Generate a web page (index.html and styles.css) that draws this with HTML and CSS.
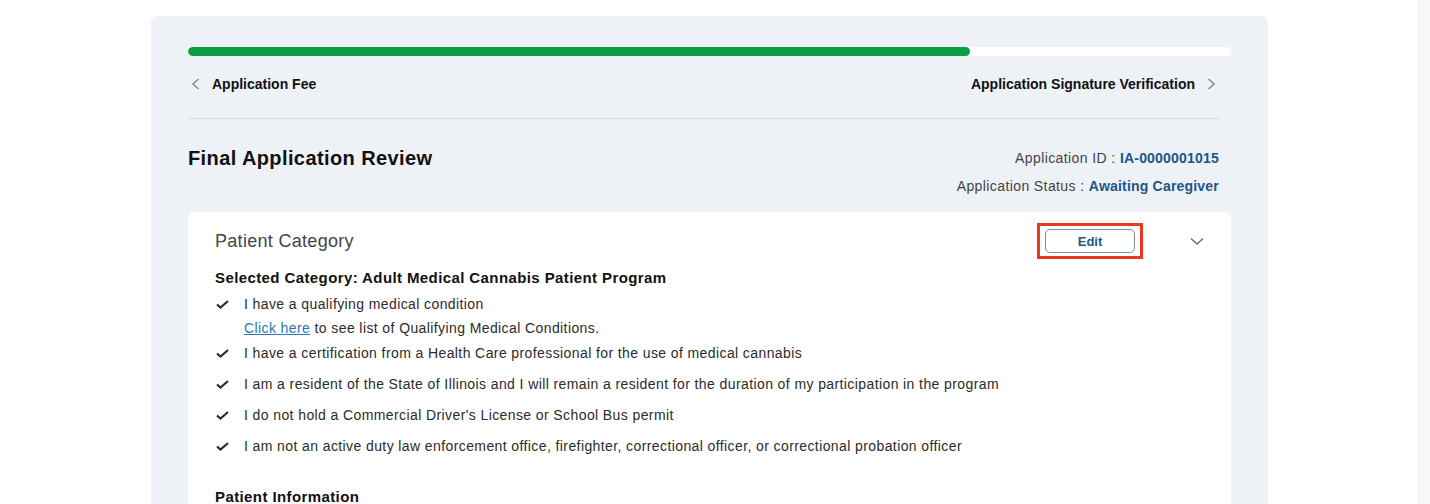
FILE: index.html
```html
<!DOCTYPE html>
<html>
  <head>
    <meta charset="UTF-8">
    <title>Final Application Review</title>
    <link rel="stylesheet" href="styles.css">
  </head>
  <body>
    <div class="page">
      <main class="main">
        <section class="panel">
          <div class="progress"><div class="progress-fill" style="width: 75%"></div></div>

          <nav class="steps">
            <a class="step" href="#">
              <svg class="step-icon" width="9" height="12" viewBox="0 0 9 12"><path d="M7.5 1 L2 6 L7.5 11" fill="none" stroke="#8a8f96" stroke-width="1.6"/></svg>
              Application Fee
            </a>
            <a class="step" href="#">
              Application Signature Verification
              <svg class="step-icon" width="9" height="12" viewBox="0 0 9 12"><path d="M1.5 1 L7 6 L1.5 11" fill="none" stroke="#8a8f96" stroke-width="1.6"/></svg>
            </a>
          </nav>

          <div class="review-head">
            <h1 class="review-title">Final Application Review</h1>
            <div class="meta">
              <p class="meta-row">Application ID : <b>IA-0000001015</b></p>
              <p class="meta-row">Application Status : <b>Awaiting Caregiver</b></p>
            </div>
          </div>

          <div class="card">
            <div class="card-head">
              <h2 class="card-title">Patient Category</h2>
              <span class="highlight"><button type="button" class="edit-btn">Edit</button></span>
              <svg class="toggle" width="14" height="9" viewBox="0 0 14 9"><path d="M1 1.5 L7 7 L13 1.5" fill="none" stroke="#6b7078" stroke-width="1.5"/></svg>
            </div>

            <h3 class="sub-title">Selected Category: Adult Medical Cannabis Patient Program</h3>
            <ul class="checks">
              <li class="has-note">
                <svg class="check" width="13" height="9" viewBox="0 0 13 9"><path d="M1 4.5 L4.5 7.5 L12 1" fill="none" stroke="#2b2b2b" stroke-width="2.2"/></svg>
                <div>
                  I have a qualifying medical condition
                  <p class="note"><a href="#">Click here</a> to see list of Qualifying Medical Conditions.</p>
                </div>
              </li>
              <li>
                <svg class="check" width="13" height="9" viewBox="0 0 13 9"><path d="M1 4.5 L4.5 7.5 L12 1" fill="none" stroke="#2b2b2b" stroke-width="2.2"/></svg>
                <div>I have a certification from a Health Care professional for the use of medical cannabis</div>
              </li>
              <li>
                <svg class="check" width="13" height="9" viewBox="0 0 13 9"><path d="M1 4.5 L4.5 7.5 L12 1" fill="none" stroke="#2b2b2b" stroke-width="2.2"/></svg>
                <div>I am a resident of the State of Illinois and I will remain a resident for the duration of my participation in the program</div>
              </li>
              <li>
                <svg class="check" width="13" height="9" viewBox="0 0 13 9"><path d="M1 4.5 L4.5 7.5 L12 1" fill="none" stroke="#2b2b2b" stroke-width="2.2"/></svg>
                <div>I do not hold a Commercial Driver's License or School Bus permit</div>
              </li>
              <li>
                <svg class="check" width="13" height="9" viewBox="0 0 13 9"><path d="M1 4.5 L4.5 7.5 L12 1" fill="none" stroke="#2b2b2b" stroke-width="2.2"/></svg>
                <div>I am not an active duty law enforcement office, firefighter, correctional officer, or correctional probation officer</div>
              </li>
            </ul>

            <h3 class="sub-title section-gap">Patient Information</h3>
          </div>
        </section>
      </main>
      <div class="scrollbar"></div>
    </div>
  </body>
</html>
```

FILE: styles.css
```css
:root {
  --panel-bg: #eef1f5;
  --green: #0b9e45;
  --blue: #1b5889;
  --text: #2b2b2b;
  --muted: #444;
}

html, body {
  margin: 0;
  height: 100%;
  overflow: hidden;
  background: #fff;
  font-family: "Liberation Sans", Arial, sans-serif;
  color: var(--text);
}

.page {
  display: flex;
  height: 100%;
}

.main {
  flex: 1;
  display: flex;
  justify-content: center;
  padding: 16px 0 0 1px;
}

.scrollbar {
  width: 11px;
  background: #f8f8f8;
  border-left: 1px solid #ededed;
}

.panel {
  width: 1117px;
  box-sizing: border-box;
  padding: 31px 37px 0;
  background: var(--panel-bg);
  border-radius: 6px 6px 0 0;
}

/* barra de progresso */
.progress {
  height: 9px;
  background: #fff;
  border-radius: 5px;
  overflow: hidden;
}

.progress-fill {
  height: 100%;
  background: var(--green);
  border-radius: 5px;
}

.steps {
  display: flex;
  justify-content: space-between;
  align-items: center;
  margin: 18px 11px 0 0;
  padding: 0 4px 24px 3px;
  border-bottom: 1px solid #d9dce1;
  line-height: 20px;
}

.step {
  display: flex;
  align-items: center;
  gap: 12px;
  font-size: 14px;
  font-weight: bold;
  color: #111;
  text-decoration: none;
}

.review-head {
  display: flex;
  justify-content: space-between;
  align-items: flex-start;
  margin-right: 12px;
  padding-top: 25px;
}

.review-title {
  margin: 0;
  font-size: 20px;
  line-height: 28px;
  letter-spacing: 0.4px;
  color: #111;
}

.meta {
  text-align: right;
  font-size: 14px;
  letter-spacing: 0.4px;
  color: var(--muted);
}

.meta-row {
  margin: 0;
  line-height: 28px;
}

.meta-row b {
  color: var(--blue);
  letter-spacing: 0.2px;
}

.card {
  margin-top: 12px;
  padding: 11px 27px 30px;
  background: #fff;
  border-radius: 6px;
}

.card-head {
  display: flex;
  align-items: center;
  height: 36px;
}

.card-title {
  flex: 1;
  margin: 0;
  font-size: 18px;
  font-weight: normal;
  color: var(--muted);
  letter-spacing: 0.3px;
}

.highlight {
  display: flex;
  padding: 3px 5px;
  border: 3px solid #e8381d;
  margin-right: 47px;
}

.edit-btn {
  width: 90px;
  height: 24px;
  background: #fff;
  border: 1px solid #7b8fa3;
  border-radius: 5px;
  font-family: inherit;
  font-size: 13px;
  font-weight: bold;
  color: var(--blue);
  cursor: pointer;
}

.sub-title {
  margin: 9px 0 0;
  font-size: 15px;
  line-height: 20px;
  letter-spacing: 0.4px;
  color: #111;
}

.section-gap {
  margin-top: 31px;
}

.checks {
  list-style: none;
  margin: 6px 0 0;
  padding: 0;
  font-size: 14px;
  line-height: 20px;
  letter-spacing: 0.4px;
}

.checks li {
  display: flex;
  align-items: flex-start;
  margin-bottom: 11px;
}

.checks li:last-child {
  margin-bottom: 0;
}

.checks li.has-note {
  margin-bottom: 8px;
}

.check {
  flex: none;
  margin: 6px 15px 0 1px;
}

.note {
  margin: 7px 0 0;
  line-height: 14px;
}

.note a {
  color: #2a78b7;
}
```
